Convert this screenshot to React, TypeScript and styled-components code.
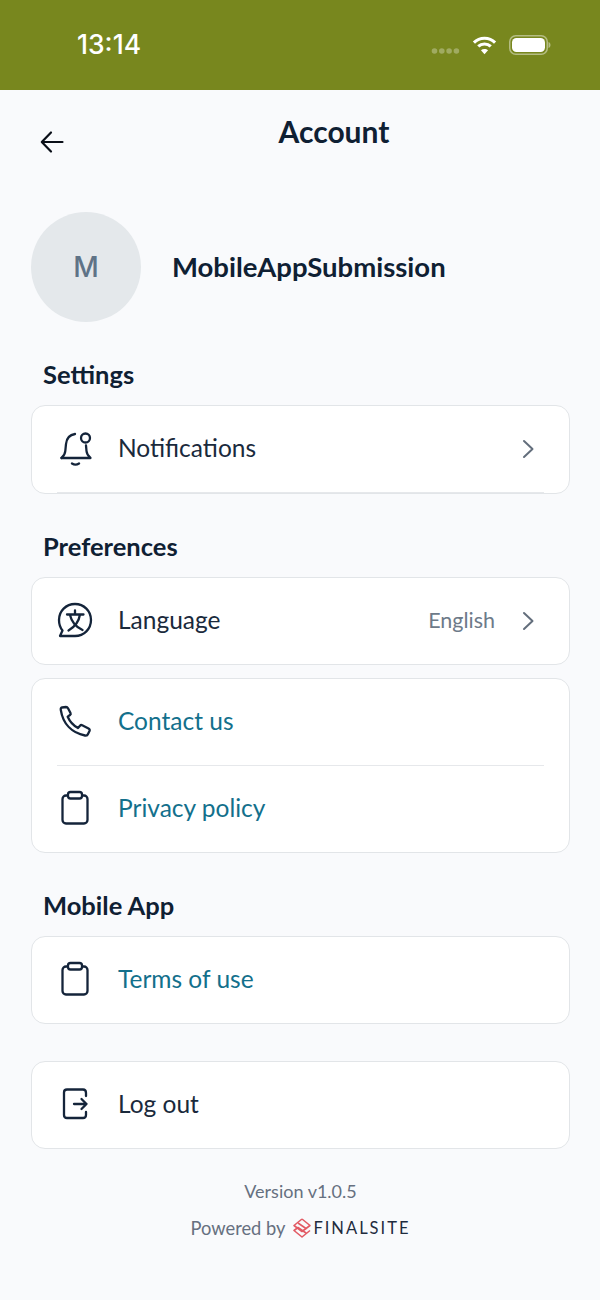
import React from 'react';
import styled, {createGlobalStyle} from 'styled-components';

const GlobalStyle = createGlobalStyle`
  html, body {
    margin: 0;
    padding: 0;
    background: #F9FAFC;
    font-family: "Lato", "Noto Sans", sans-serif;
    color: #0F2033;
  }
`;

const PageSC = styled('div')`
  width: 600px;
  height: 1300px;
  overflow: hidden;
  background: #F9FAFC;
`;

const StatusBarSC = styled('div')`
  height: 90px;
  background: #78871E;
  display: flex;
  align-items: flex-start;
  justify-content: space-between;
  padding: 29px 49px 0 77px;
  box-sizing: border-box;
  color: white;
`;

const ClockSC = styled('div')`
  font-family: "Inter", sans-serif;
  font-size: 26.5px;
  line-height: 31px;
  font-weight: 500;
`;

const StatusIconsSC = styled('div')`
  display: flex;
  align-items: center;
  gap: 12px;
  height: 31px;
`;

const SignalDotsSC = styled('svg')`
  margin-top: 13px;
`;

const HeaderSC = styled('header')`
  display: flex;
  align-items: flex-start;
  height: 122px;
`;

const BackButtonSC = styled('div')`
  width: 68px;
  padding: 40px 0 0 40px;
  box-sizing: border-box;
  flex-shrink: 0;

  svg {
    display: block;
  }
`;

const TitleSC = styled('h1')`
  flex: 1;
  margin: 23px 0 0;
  text-align: center;
  font-size: 30px;
  line-height: 36px;
  font-weight: 700;
`;

const ProfileSC = styled('div')`
  display: flex;
  align-items: center;
  gap: 31px;
  padding-left: 31px;
`;

const AvatarSC = styled('div')`
  width: 110px;
  height: 110px;
  border-radius: 50%;
  background: #E4E8EB;
  color: #5F7387;
  font-family: "Inter", sans-serif;
  font-size: 28px;
  font-weight: 500;
  display: flex;
  align-items: center;
  justify-content: center;
`;

const NameSC = styled('div')`
  font-size: 27.5px;
  font-weight: 700;
  margin-bottom: 2px;
`;

const ContentSC = styled('div')`
  padding: 0 30px 0 31px;
`;

const SectionLabelSC = styled('h2')<{$top: number}>`
  margin: ${p => p.$top}px 0 0 12px;
  font-size: 25.5px;
  line-height: 28px;
  height: 30px;
  font-weight: 700;
`;

const CardSC = styled('div')<{$top: number}>`
  margin-top: ${p => p.$top}px;
  background: white;
  border: 1.5px solid #E2E5E8;
  border-radius: 14px;
  box-sizing: border-box;
  padding: 0 25px;
`;

const RowSC = styled('div')<{$divider?: boolean; $height: number}>`
  height: ${p => p.$height}px;
  display: flex;
  align-items: center;
  box-sizing: border-box;
  border-bottom: ${p => (p.$divider ? '1.5px solid #E6E8EB' : 'none')};
`;

const IconSlotSC = styled('div')`
  width: 36px;
  height: 36px;
  margin: 0 25px 2px 0;
  flex-shrink: 0;

  svg {
    display: block;
  }
`;

const RowLabelSC = styled('span')<{$link?: boolean}>`
  flex: 1;
  font-size: 24.5px;
  margin-bottom: 3px;
  color: ${p => (p.$link ? '#13708C' : '#1A2A3C')};
`;

const RowValueSC = styled('span')`
  font-size: 21.5px;
  color: #6D7A89;
  margin: 0 26px 2px 0;
`;

const ChevronSC = styled('svg')`
  margin-right: 9px;
  display: block;
`;

const FooterSC = styled('footer')`
  margin-top: 30px;
  display: flex;
  flex-direction: column;
  align-items: center;
  color: #667080;
  font-size: 18px;
  line-height: 24px;
`;

const PoweredSC = styled('div')`
  margin-top: 13px;
  display: flex;
  align-items: center;
  gap: 7px;
  font-size: 18.3px;
`;

const BrandSC = styled('span')`
  display: flex;
  align-items: center;
  gap: 1px;
  color: #1F2C3E;
  font-size: 16.5px;
  letter-spacing: 2px;
`;

const stroke = {fill: 'none', stroke: '#14243A', strokeWidth: 2.3, strokeLinecap: 'round', strokeLinejoin: 'round'} as const;

const BellIcon = () => (
  <svg width="36" height="36" viewBox="0 0 36 36" {...stroke}>
    <path d="M4.500 28H33.500C31 26 29.800 24 29.500 21L29 15.500" />
    <path d="M4.500 28C7 26 8 24 8.300 21L9 14C9.500 9 12.500 4.800 18 4" />
    <circle cx="28.500" cy="8" r="4.500" />
    <path d="M15 33.500C17 34.800 20 34.800 22 33.500" />
  </svg>
);

const LanguageIcon = () => (
  <svg width="36" height="36" viewBox="0 0 36 36" {...stroke}>
    <path d="M18 2C27 2 34 9 34 18C34 27 27 34 18 34H3L5.500 28.500C3 25.500 2 22 2 18C2 9 9 2 18 2Z" />
    <path d="M10 12.500H26.500M18 8.500V12.500M23 12.500C22 19 17.500 25 11.500 28.500M13 13C14.500 19.500 19 25 25.500 28" />
  </svg>
);

const PhoneIcon = () => (
  <svg width="36" height="36" viewBox="0 0 36 36" {...stroke}>
    <path d="M5 4.500L9 4C10 4 10.500 4.300 11 5.200L13.500 10C13.900 10.800 13.700 11.500 13 12L10.700 13.700C13 19 16.500 22.500 21 25L23 22.700C23.600 22 24.400 21.800 25.200 22.200L31.500 25.500C32.500 26 32.900 27 32.500 28L31 31C30.500 32.300 29.500 32.800 28 32.500C15 30 6 21 3.800 7C3.500 5.500 4 4.700 5 4.500Z" />
  </svg>
);

const ClipboardIcon = () => (
  <svg width="36" height="36" viewBox="0 0 36 36" {...stroke}>
    <rect x="5.500" y="5.500" width="25" height="28" rx="3.500" />
    <rect x="11" y="2" width="14" height="6.500" rx="2.500" fill="white" />
  </svg>
);

const LogoutIcon = () => (
  <svg width="36" height="36" viewBox="0 0 36 36" {...stroke}>
    <path d="M29 10V7C29 4.500 28 3.500 26 3.500H10C8 3.500 7 4.500 7 6.500V29C7 31 8 32 10 32H26C28 32 29 31 29 29V26" />
    <path d="M17 18H29.500M24.500 13L29.500 18L24.500 23" />
  </svg>
);

const Chevron = () => (
  <ChevronSC width="14" height="20" viewBox="0 0 14 20" fill="none" stroke="#636E7C" strokeWidth="2" strokeLinecap="round" strokeLinejoin="round">
    <path d="M3 2L11.500 10L3 18" />
  </ChevronSC>
);

const FinalsiteMark = () => (
  <svg width="20" height="20" viewBox="0 0 20 20" fill="none" stroke="#E25A64" strokeWidth="1.600" strokeLinejoin="round">
    <path d="M10 1L18 7.500L14 10.500L6 5" />
    <path d="M10 1L2 7.500L10 13.500L14 10.500" />
    <path d="M18 12.500L10 19L2 12.500L6 9.500L14 15" />
  </svg>
);

export default function App() {
  return (
    <PageSC>
      <GlobalStyle />
      <StatusBarSC>
        <ClockSC>13:14</ClockSC>
        <StatusIconsSC>
          <SignalDotsSC width="29" height="8" viewBox="0 0 29 8" fill="rgba(255,255,255,0.3)">
            <circle cx="3.500" cy="4" r="2.800" />
            <circle cx="10.800" cy="4" r="2.800" />
            <circle cx="18.100" cy="4" r="2.800" />
            <circle cx="25.400" cy="4" r="2.800" />
          </SignalDotsSC>
          <svg width="25" height="20" viewBox="0 0 26 20" fill="none" stroke="white" strokeWidth="3.200">
            <path d="M2 7.500C8 1.500 18 1.500 24 7.500" />
            <path d="M6.500 11.500C10 8 16 8 19.500 11.500" />
            <path d="M13 19.500L9.300 15.500C11.300 13.800 14.700 13.800 16.700 15.500Z" fill="white" stroke="none" />
          </svg>
          <svg width="42" height="20" viewBox="0 0 42 20" fill="none">
            <rect x="0.750" y="0.750" width="37.500" height="18.500" rx="6" stroke="rgba(255,255,255,0.45)" strokeWidth="1.500" />
            <rect x="3" y="3" width="33" height="14" rx="4.500" fill="white" />
            <path d="M39.500 7V13C41 12.500 41.500 11 41.500 10C41.500 9 41 7.500 39.500 7Z" fill="rgba(255,255,255,0.45)" />
          </svg>
        </StatusIconsSC>
      </StatusBarSC>
      <HeaderSC>
        <BackButtonSC>
          <svg width="24" height="24" viewBox="0 0 24 24" fill="none" stroke="#0A0F18" strokeWidth="2.200" strokeLinecap="round" strokeLinejoin="round">
            <path d="M2 12H22.500M11 2.500L1.800 12L11 21.500" />
          </svg>
        </BackButtonSC>
        <TitleSC>Account</TitleSC>
      </HeaderSC>
      <ProfileSC>
        <AvatarSC>M</AvatarSC>
        <NameSC>MobileAppSubmission</NameSC>
      </ProfileSC>
      <ContentSC>
        <SectionLabelSC $top={38}>Settings</SectionLabelSC>
        <CardSC $top={15}>
          <RowSC $height={87} $divider>
            <IconSlotSC><BellIcon /></IconSlotSC>
            <RowLabelSC>Notifications</RowLabelSC>
            <Chevron />
          </RowSC>
        </CardSC>
        <SectionLabelSC $top={38}>Preferences</SectionLabelSC>
        <CardSC $top={15}>
          <RowSC $height={86}>
            <IconSlotSC><LanguageIcon /></IconSlotSC>
            <RowLabelSC>Language</RowLabelSC>
            <RowValueSC>English</RowValueSC>
            <Chevron />
          </RowSC>
        </CardSC>
        <CardSC $top={13}>
          <RowSC $height={87} $divider>
            <IconSlotSC><PhoneIcon /></IconSlotSC>
            <RowLabelSC $link>Contact us</RowLabelSC>
          </RowSC>
          <RowSC $height={86}>
            <IconSlotSC><ClipboardIcon /></IconSlotSC>
            <RowLabelSC $link>Privacy policy</RowLabelSC>
          </RowSC>
        </CardSC>
        <SectionLabelSC $top={38}>Mobile App</SectionLabelSC>
        <CardSC $top={15}>
          <RowSC $height={86}>
            <IconSlotSC><ClipboardIcon /></IconSlotSC>
            <RowLabelSC $link>Terms of use</RowLabelSC>
          </RowSC>
        </CardSC>
        <CardSC $top={37}>
          <RowSC $height={86}>
            <IconSlotSC><LogoutIcon /></IconSlotSC>
            <RowLabelSC>Log out</RowLabelSC>
          </RowSC>
        </CardSC>
        <FooterSC>
          <div>Version v1.0.5</div>
          <PoweredSC>
            Powered by
            <BrandSC>
              <FinalsiteMark />
              FINALSITE
            </BrandSC>
          </PoweredSC>
        </FooterSC>
      </ContentSC>
    </PageSC>
  );
}
